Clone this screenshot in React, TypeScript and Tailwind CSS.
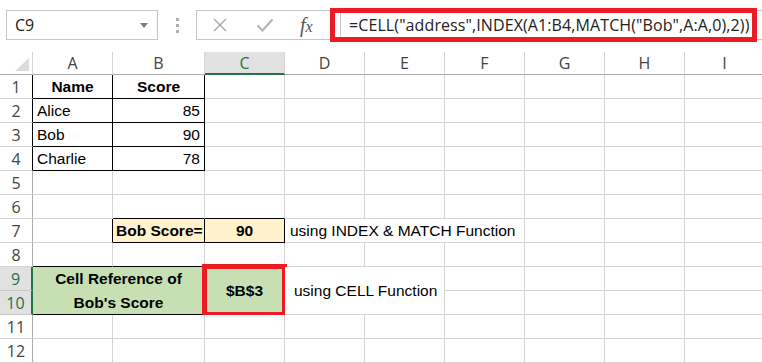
import type { ReactNode } from "react";
import { twMerge } from "tailwind-merge";

const COLS = ["A", "B", "C", "D", "E", "F", "G", "H", "I"];

type Cell = {
  text?: ReactNode;
  cls?: string;
  span?: string;
  red?: boolean;
};

const TBL = "border-r-black border-b-black";

const cells: Record<string, Cell> = {
  A1: { text: "Name", cls: `${TBL} justify-center font-bold` },
  B1: { text: "Score", cls: `${TBL} justify-center font-bold` },
  A2: { text: "Alice", cls: TBL },
  B2: { text: "85", cls: `${TBL} justify-end` },
  A3: { text: "Bob", cls: TBL },
  B3: { text: "90", cls: `${TBL} justify-end` },
  A4: { text: "Charlie", cls: TBL },
  B4: { text: "78", cls: `${TBL} justify-end` },
  B6: { cls: "border-b-black" },
  C6: { cls: "border-b-black" },
  A7: { cls: "border-r-black" },
  B7: { text: "Bob Score=", cls: `${TBL} bg-[#fff2cc] px-[3px] font-bold` },
  C7: { text: "90", cls: `${TBL} bg-[#fff2cc] justify-center font-bold` },
  D7: { text: "using INDEX & MATCH Function", span: "col-span-3", cls: "pl-[5px]" },
  A8: { cls: "border-b-black" },
  B8: { cls: "border-b-black" },
  A9: {
    text: (
      <span className="text-center leading-[24px]">
        Cell Reference of
        <br />
        Bob's Score
      </span>
    ),
    span: "col-span-2 row-span-2",
    cls: `${TBL} bg-[#c6e0b4] justify-center font-bold`,
  },
  C9: {
    text: "$B$3",
    span: "row-span-2",
    cls: "bg-[#c6e0b4] justify-center font-bold",
    red: true,
  },
  D9: { text: "using CELL Function", span: "col-span-2 row-span-2", cls: "pl-[9px]" },
};

const covered = new Set(["B9", "A10", "B10", "C10", "E7", "F7", "E9", "D10", "E10"]);

function GridCell({ cell }: { cell?: Cell }) {
  return (
    <div
      className={twMerge(
        "relative flex items-center whitespace-nowrap border-r border-b border-r-[#d4d4d4] border-b-[#d4d4d4] bg-white px-[4px] pt-[1px] text-black",
        cell?.span,
        cell?.cls,
      )}
    >
      {cell?.text}
      {cell?.red && (
        <div className="pointer-events-none absolute -top-[3px] -left-[3px] -right-[3px] -bottom-[3px] border-[5px] border-[#ed1c24]" />
      )}
    </div>
  );
}

function NameBox() {
  return (
    <div className="flex h-[30px] w-[152px] items-center justify-between border border-[#c6c6c6] bg-white pl-[8px] pr-[9px] font-['Open_Sans',sans-serif] text-[16px] text-[#222]">
      <span>C9</span>
      <svg width="8" height="5" viewBox="0 0 8 5">
        <path d="M0 0h8L4 5z" fill="#7a7a7a" />
      </svg>
    </div>
  );
}

function FormulaButtons() {
  return (
    <div className="flex h-[30px] w-[138px] items-center border border-[#c6c6c6] bg-white pl-[15px]">
      <svg width="16" height="16" viewBox="0 0 16 16">
        <path d="M2 2l12 12M14 2L2 14" stroke="#a8a8a8" strokeWidth="1.4" />
      </svg>
      <svg className="ml-[28px]" width="18" height="16" viewBox="0 0 18 16">
        <path d="M1.5 8.5l5 5L16.5 2.5" stroke="#b4b4b4" strokeWidth="2.2" fill="none" />
      </svg>
      <span className="ml-[26px] font-['Liberation_Serif',serif] text-[20px] italic text-[#555]">
        f<span className="text-[16px]">x</span>
      </span>
    </div>
  );
}

export default function App() {
  return (
    <div className="h-[363px] w-[762px] overflow-hidden bg-white font-['Liberation_Sans',Arial,sans-serif]">
      {/* formula bar */}
      <div className="flex h-[52px] items-start pl-[6px] pt-[10px]">
        <NameBox />
        <div className="flex h-[30px] w-[38px] flex-col items-center justify-center gap-[3px]">
          <span className="h-[3px] w-[3px] bg-[#b0b0b0]" />
          <span className="h-[3px] w-[3px] bg-[#b0b0b0]" />
          <span className="h-[3px] w-[3px] bg-[#b0b0b0]" />
        </div>
        <FormulaButtons />
        <div className="relative ml-[-4px] flex-1">
          <div className="ml-[10px] flex h-[30px] items-center border border-r-0 border-[#c6c6c6] bg-white pl-[8px] font-['Open_Sans',sans-serif] text-[16px] tracking-[0.1px] text-[#222]">
            =CELL("address",INDEX(A1:B4,MATCH("Bob",A:A,0),2))
          </div>
          <div className="pointer-events-none absolute -top-[2px] left-[0px] right-[5px] -bottom-[2px] border-[5px] border-[#ed1c24]" />
        </div>
      </div>

      {/* sheet */}
      <div className="grid grid-cols-[33px_80px_92px_repeat(7,80px)] grid-rows-[23px_repeat(12,24px)] text-[15.5px]">
        <div className="flex items-end justify-end border-r border-b border-r-[#d4d4d4] border-b-[#ababab] pb-[3px] pr-[3px]">
          <svg width="14" height="13" viewBox="0 0 14 13">
            <path d="M14 0v13H0z" fill="#dcdcdc" />
          </svg>
        </div>
        {COLS.map((c) => (
          <div
            key={c}
            className={
              c === "C"
                ? "flex items-center justify-center border-r border-b-2 border-r-[#d4d4d4] border-b-[#217346] bg-[#e1e1e1] font-['Open_Sans',sans-serif] text-[16px] text-[#217346]"
                : "flex items-center justify-center border-r border-b border-r-[#d4d4d4] border-b-[#ababab] font-['Open_Sans',sans-serif] text-[16px] text-[#444]"
            }
          >
            {c}
          </div>
        ))}
        {Array.from({ length: 12 }, (_, i) => i + 1).map((r) => {
          const sel = r === 9 || r === 10;
          const inTable = r <= 4;
          return [
            <div
              key={`h${r}`}
              className={
                sel
                  ? "flex items-center justify-center border-r-2 border-b border-r-[#217346] border-b-[#c6c6c6] bg-[#e1e1e1] font-['Open_Sans',sans-serif] text-[16px] text-[#217346]"
                  : inTable
                    ? "flex items-center justify-center border-r border-b border-r-black border-b-[#d4d4d4] font-['Open_Sans',sans-serif] text-[16px] text-[#444]"
                    : "flex items-center justify-center border-r border-b border-r-[#ababab] border-b-[#d4d4d4] font-['Open_Sans',sans-serif] text-[16px] text-[#444]"
              }
            >
              {r}
            </div>,
            ...COLS.filter((c) => !covered.has(`${c}${r}`)).map((c) => (
              <GridCell key={`${c}${r}`} cell={cells[`${c}${r}`]} />
            )),
          ];
        })}
      </div>
    </div>
  );
}
